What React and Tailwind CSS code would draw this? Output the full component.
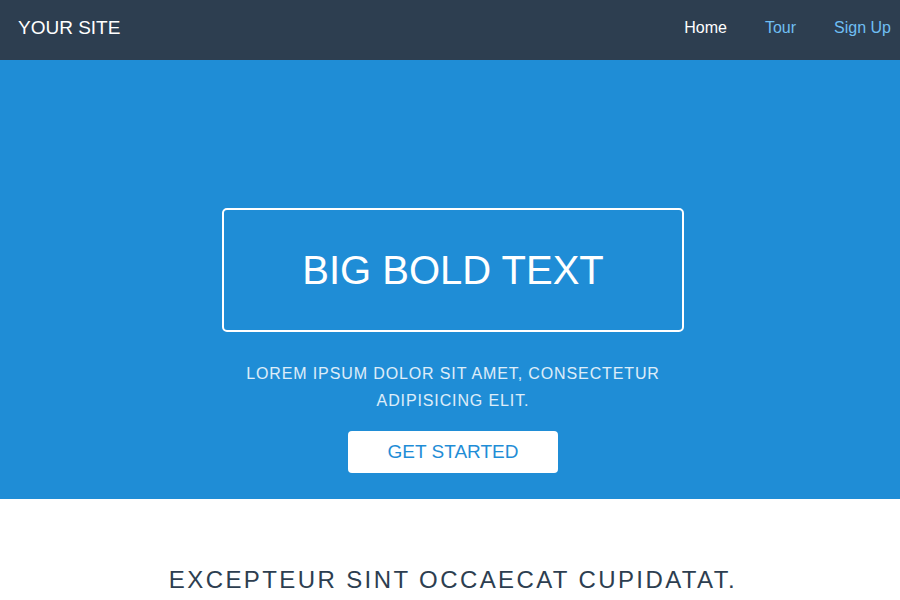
export default function App() {
	return (
		<div className="w-[900px] h-[600px] overflow-hidden bg-white font-['Liberation_Sans',Arial,sans-serif]">
			{/* Header */}
			<div className="h-[60px] bg-[#2d3e50] flex items-center justify-between pl-[18px] pr-[9px] pb-[4px]">
				<a className="text-white text-[19px]">YOUR SITE</a>
				<nav className="flex items-center gap-[38px] text-[16px]">
					<a className="text-white">Home</a>
					<a className="text-[#6fbef3]">Tour</a>
					<a className="text-[#6fbef3]">Sign Up</a>
				</nav>
			</div>

			{/* Splash */}
			<div className="h-[439px] bg-[#1f8dd6] flex flex-col items-center pt-[148px] pl-[6px] uppercase">
				<h1 className="w-[462px] h-[124px] border-2 border-white rounded-[5px] flex items-center justify-center text-white text-[40px] font-normal leading-none">
					BIG BOLD TEXT
				</h1>
				<p className="mt-[28px] w-[440px] text-center text-white/85 text-[16px] leading-[27px] tracking-[0.055em]">
					Lorem ipsum dolor sit amet, consectetur adipisicing elit.
				</p>
				<a className="mt-[17px] w-[210px] h-[42px] bg-white rounded-[4px] flex items-center justify-center text-[#1f8dd6] text-[19px]">
					Get Started
				</a>
			</div>

			{/* Content */}
			<div className="pt-[66px] pl-[6px] flex justify-center">
				<h2 className="text-[24px] uppercase tracking-[0.1em] text-[#2d3e50] leading-[30px]">
					Excepteur sint occaecat cupidatat.
				</h2>
			</div>
		</div>
	);
}
